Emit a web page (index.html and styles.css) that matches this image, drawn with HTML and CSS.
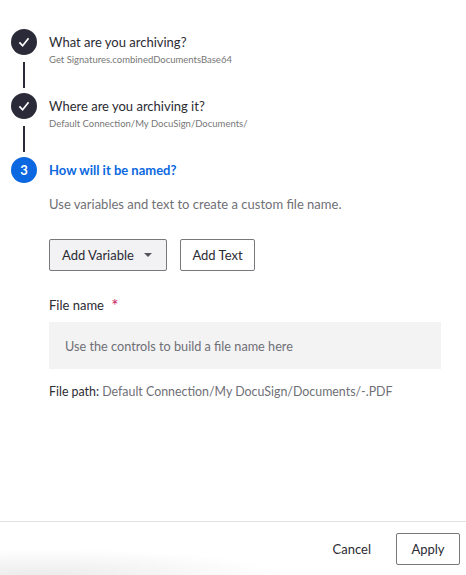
FILE: index.html
```html
<!DOCTYPE html>
<html lang="en">
  <head>
    <meta charset="UTF-8" />
    <title>Archive document</title>
    <link rel="stylesheet" href="styles.css">
  </head>
  <body>
    <div class="panel">
      <main class="steps">
        <!-- finished steps -->
        <section class="step">
          <div class="rail">
            <span class="badge badge-done">
              <svg width="14" height="14" viewBox="0 0 14 14"><path d="M2.4 7.4l3.2 3.4 6-7.6" fill="none" stroke="#fff" stroke-width="1.7"/></svg>
            </span>
            <span class="line"></span>
          </div>
          <div class="step-text">
            <h2 class="step-title">What are you archiving?</h2>
            <p class="step-sub">Get Signatures.combinedDocumentsBase64</p>
          </div>
        </section>

        <section class="step">
          <div class="rail">
            <span class="badge badge-done">
              <svg width="14" height="14" viewBox="0 0 14 14"><path d="M2.4 7.4l3.2 3.4 6-7.6" fill="none" stroke="#fff" stroke-width="1.7"/></svg>
            </span>
            <span class="line"></span>
          </div>
          <div class="step-text">
            <h2 class="step-title">Where are you archiving it?</h2>
            <p class="step-sub">Default Connection/My DocuSign/Documents/</p>
          </div>
        </section>

        <!-- current step -->
        <section class="step step-current">
          <div class="rail">
            <span class="badge badge-active">3</span>
          </div>
          <div class="step-body">
            <h2 class="step-title title-active">How will it be named?</h2>
            <p class="hint">Use variables and text to create a custom file name.</p>

            <div class="controls">
              <button class="btn btn-menu">Add Variable <span class="caret"></span></button>
              <button class="btn btn-text">Add Text</button>
            </div>

            <div class="field-label">File name <span class="req">*</span></div>
            <div class="name-box">Use the controls to build a file name here</div>
            <p class="file-path"><span class="path-label">File path:</span> Default Connection/My DocuSign/Documents/-.PDF</p>
          </div>
        </section>
      </main>

      <footer class="footer">
        <button class="btn-link">Cancel</button>
        <button class="btn btn-apply">Apply</button>
      </footer>
    </div>
  </body>
</html>
```

FILE: styles.css
```css
* {
  box-sizing: border-box;
}

body {
  margin: 0;
  font-family: Lato, 'Noto Sans', sans-serif;
  background-color: #fff;
  color: #2b2b33;
}

.panel {
  display: flex;
  flex-direction: column;
  height: 575px;
}

.steps {
  flex: 1;
  padding: 29px 25px 0 11px;
}

.step {
  display: flex;
  gap: 12px;
  height: 64px;
}

.step-current {
  height: auto;
}

.rail {
  display: flex;
  flex-direction: column;
  align-items: center;
  flex: none;
  width: 26px;
}

.badge {
  display: flex;
  align-items: center;
  justify-content: center;
  width: 26px;
  height: 26px;
  border-radius: 50%;
  font-size: 13px;
  font-weight: 700;
  color: #fff;
}

.badge-done {
  background-color: #2a2a38;
}

.badge-active {
  background-color: #0b68e0;
}

.line {
  width: 2px;
  height: 26px;
  margin-top: 7px;
  background-color: #2a2a38;
}

.step-text {
  padding-top: 3px;
}

.step-title {
  margin: 0;
  font-size: 13px;
  line-height: 20px;
  font-weight: 400;
  color: #2b2b33;
}

.title-active {
  font-weight: 700;
  color: #0b68e0;
}

.step-sub {
  margin: 1px 0 0;
  font-size: 9.5px;
  line-height: 14px;
  color: #777;
}

.step-body {
  flex: 1;
  padding-top: 3px;
}

.hint {
  margin: 14px 0 0;
  font-size: 13px;
  line-height: 20px;
  color: #6f6f76;
}

.controls {
  display: flex;
  gap: 13px;
  margin-top: 25px;
}

.btn {
  height: 32px;
  padding: 0 12px;
  border: 1px solid #77777c;
  border-radius: 2px;
  background-color: #fff;
  font-family: inherit;
  font-size: 13px;
  color: #2b2b33;
}

.btn-menu {
  display: flex;
  align-items: center;
  gap: 10px;
  width: 118px;
  background-color: #f2f2f4;
}

.btn-text {
  width: 75px;
  padding: 0;
}

.caret {
  width: 0;
  height: 0;
  border-left: 4px solid transparent;
  border-right: 4px solid transparent;
  border-top: 4px solid #55555c;
}

.field-label {
  margin-top: 24px;
  font-size: 13px;
  line-height: 20px;
}

.req {
  margin-left: 4px;
  font-size: 17px;
  line-height: 14px;
  vertical-align: -2px;
  color: #c8235f;
}

.name-box {
  display: flex;
  align-items: center;
  height: 47px;
  margin-top: 7px;
  padding: 0 16px;
  background-color: #f3f3f3;
  font-size: 12.7px;
  color: #6f6f76;
}

.file-path {
  margin: 14px 0 0;
  font-size: 12.4px;
  line-height: 18px;
  color: #6f6f76;
}

.path-label {
  color: #2b2b33;
}

.footer {
  display: flex;
  align-items: center;
  justify-content: flex-end;
  gap: 25px;
  height: 54px;
  padding: 0 6px 0 0;
  border-top: 1px solid #e2e2e2;
  background: radial-gradient(ellipse 240px 26px at 40px 100%, #ececec, #fff);
}

.btn-link {
  border: none;
  background: none;
  padding: 0;
  font-family: inherit;
  font-size: 13px;
  color: #2b2b33;
}

.btn-apply {
  width: 64px;
  padding: 0;
}
```
